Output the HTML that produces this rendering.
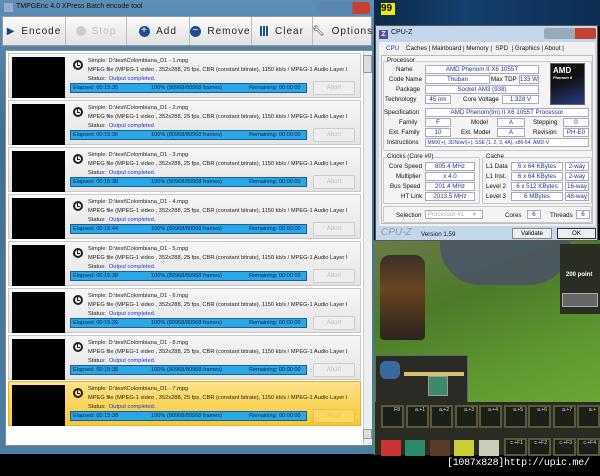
<!DOCTYPE html>
<html><head><meta charset="utf-8"><style>
*{margin:0;padding:0;box-sizing:border-box}
body{width:600px;height:476px;overflow:hidden;background:#000;position:relative;font-family:"Liberation Sans",sans-serif}
.a{position:absolute}
.win{left:0;top:0;width:374px;height:454px;background:linear-gradient(#5d8fb5,#3f6f98 30%,#4a7ea6);}
.tb{top:16px;left:2px;width:370px;height:30px;background:linear-gradient(#fafafa,#e2e2e2);border:1px solid #999}
.btn{position:absolute;top:0;height:28px;border-right:1px solid #bbb;font-size:10px;color:#222;letter-spacing:1px;display:flex;align-items:center;justify-content:center;gap:6px}
.list{left:5px;top:50px;width:367px;height:396px;background:#fff;border:1px solid #888}
.it{position:absolute;left:2px;width:353px;height:45px;background:linear-gradient(#f6f6f6,#e4e4e4);border:1px solid #c8c8c8}
.th{position:absolute;left:3px;top:3px;width:53px;height:41px;background:#000}
.ck{position:absolute;left:64px;top:6px;width:10px;height:10px;border:2px solid #222;border-radius:50%}
.ck:after{content:"";position:absolute;left:2px;top:0px;width:2px;height:3px;border-left:1.2px solid #222;border-bottom:1.2px solid #222}
.t{position:absolute;left:79px;font-size:5.7px;color:#222;white-space:nowrap}
.pb{position:absolute;left:61px;top:29px;width:237px;height:10px;background:#2aa7e6;border:1px solid #1a5f99;font-size:5.6px;color:#123;line-height:8px}
.pb span{position:absolute}
.ab{position:absolute;left:304px;top:27px;width:42px;height:14px;border:1px solid #ccc;border-radius:2px;background:#eee;font-size:6px;color:#bbb;text-align:center;line-height:13px}
.cz{left:375px;top:25px;width:223px;height:216px;background:#c4d6ea;border:1px solid #555}
.cb{position:absolute;background:#f0f0f0}
.f{position:absolute;font-size:6.2px;color:#111;white-space:nowrap}
.v{position:absolute;background:#fff;border:1px solid #aab;font-size:6.2px;color:#223399;text-align:center;line-height:8px;height:9px;white-space:nowrap;overflow:hidden}
.g{position:absolute;border:1px solid #c8c8c8;border-radius:2px}
.sl{position:absolute;width:23px;height:23px;background:#1c1f18;border:2px solid #5a5a38;font-size:5px;color:#ddd;text-align:right;padding-right:2px}
</style></head><body>
<div class="a" style="left:374px;top:0;width:226px;height:26px;background:linear-gradient(90deg,#0c2a4a,#13406e 40%,#0d2d52)"></div>
<div class="a" style="left:381px;top:3px;width:14px;height:12px;background:#ee0;color:#000;font-size:10px;font-weight:bold;line-height:12px">99</div>
<div class="a" style="left:374px;top:240px;width:226px;height:215px;background:linear-gradient(160deg,#6a7a4a,#4e7a2a 30%,#5e9a30 60%,#73b03a)"></div>
<div class="a" style="left:440px;top:240px;width:130px;height:45px;background:#4a5565;border-radius:0 0 40px 40px;opacity:.9"></div>
<div class="a" style="left:380px;top:255px;width:45px;height:85px;background:linear-gradient(#3a3028,#6a4420 40%,#2a2420);border-radius:10px 10px 4px 4px"></div>
<div class="a" style="left:560px;top:244px;width:40px;height:70px;background:#2a2d22"></div>
<div class="a" style="left:566px;top:272px;width:30px;font-size:6px;color:#fff;font-weight:bold">200 point</div>
<div class="a" style="left:562px;top:293px;width:36px;height:14px;background:#666;border:1px solid #aaa"></div>
<div class="a" style="left:375px;top:355px;width:93px;height:50px;background:#2b2b26;border:1px solid #666"></div>
<div class="a" style="left:404px;top:372px;width:60px;height:4px;background:#d9c070"></div>
<div class="a" style="left:380px;top:361px;width:20px;height:18px;background:#3a6a9a;border-radius:6px"></div>
<div class="a" style="left:428px;top:376px;width:20px;height:20px;background:#3c8a6a;border:1px solid #999"></div>
<div class="a" style="left:375px;top:402px;width:225px;height:53px;background:#2a2b22"></div>
<div class="sl" style="left:381px;top:405px">F8</div><div class="sl" style="left:406px;top:405px">a.+1</div><div class="sl" style="left:430px;top:405px">a.+2</div><div class="sl" style="left:455px;top:405px">a.+3</div><div class="sl" style="left:479px;top:405px">a.+4</div><div class="sl" style="left:504px;top:405px">a.+5</div><div class="sl" style="left:528px;top:405px">a.+6</div><div class="sl" style="left:553px;top:405px">a.+7</div><div class="sl" style="left:577px;top:405px">a.+</div>
<div class="a" style="left:381px;top:440px;width:20px;height:16px;background:#c33"></div><div class="a" style="left:405px;top:440px;width:20px;height:16px;background:#2a8a6a"></div><div class="a" style="left:430px;top:440px;width:20px;height:16px;background:#5a3a2a"></div><div class="a" style="left:454px;top:440px;width:20px;height:16px;background:#cc3"></div><div class="a" style="left:479px;top:440px;width:20px;height:16px;background:#ccb"></div>
<div class="sl" style="left:504px;top:438px;height:18px">c.+F1</div><div class="sl" style="left:528px;top:438px;height:18px">c.+F2</div><div class="sl" style="left:553px;top:438px;height:18px">c.+F3</div><div class="sl" style="left:577px;top:438px;height:18px">c.+F4</div>
<div class="a" style="left:447px;top:458px;font-size:10px;color:#fff;font-family:'Liberation Mono',monospace;letter-spacing:-0.3px;white-space:nowrap">[1087x828]http://upic.me/</div>

<div class="a win">
<div class="a" style="left:4px;top:3px;width:9px;height:9px;background:#9ac"></div>
<div class="a" style="left:16px;top:3px;font-size:7px;color:#111">TMPGEnc 4.0 XPress Batch encode tool</div>
<div class="a" style="left:318px;top:2px;width:52px;height:12px;background:linear-gradient(90deg,#5b86b0 66%,#c84030 66%);border-radius:3px"></div>
<div class="a tb">
<div class="btn" style="left:0;width:63px"><span style="color:#15457a">▶</span>Encode</div>
<div class="btn" style="left:63px;width:61px;color:#bbb"><span style="display:inline-block;width:10px;height:10px;border-radius:50%;background:#ccc"></span>Stop</div>
<div class="btn" style="left:124px;width:63px"><span style="display:inline-block;width:11px;height:11px;border-radius:50%;background:#1d4f8a;color:#fff;font-size:10px;line-height:10px;text-align:center">+</span>Add</div>
<div class="btn" style="left:187px;width:62px"><span style="display:inline-block;width:11px;height:11px;border-radius:50%;background:#1d4f8a;color:#fff;font-size:10px;line-height:10px;text-align:center">−</span>Remove</div>
<div class="btn" style="left:249px;width:61px"><span style="display:inline-block;width:9px;height:10px;background:repeating-linear-gradient(90deg,#1d4f8a 0 2px,#fff 2px 3px)"></span>Clear</div>
<div class="btn" style="left:310px;width:59px;border:none"><span style="color:#223">🔧︎</span>Options</div>
</div>
<div class="a list">
<div class="a" style="left:357px;top:0;width:9px;height:394px;background:#eee;border-left:1px solid #ccc"></div>
<div class="a" style="left:357px;top:4px;width:9px;height:18px;background:#ddd;border:1px solid #999"></div>
<div class="a" style="left:357px;top:378px;width:9px;height:10px;background:#ddd;border:1px solid #999"></div>

<div class="it" style="top:2px"><div class="th"></div><div class="ck"></div><div class="t" style="top:4px">Simple: D:\test\Colombiana_D1 - 1.mpg</div><div class="t" style="top:13px">MPEG file (MPEG-1 video , 352x288, 25 fps, CBR (constant bitrate), 1150 kb/s / MPEG-1 Audio Layer I</div><div class="t" style="top:22px">Status: <span style="color:#2233cc">&nbsp;Output completed.</span></div><div class="pb"><span style="left:2px">Elapsed: 00:15:35</span><span style="left:80px">100% (80968/80968 frames)</span><span style="left:178px">Remaining: 00:00:00</span></div><div class="ab">Abort</div></div>
<div class="it" style="top:49px"><div class="th"></div><div class="ck"></div><div class="t" style="top:4px">Simple: D:\test\Colombiana_D1 - 2.mpg</div><div class="t" style="top:13px">MPEG file (MPEG-1 video , 352x288, 25 fps, CBR (constant bitrate), 1150 kb/s / MPEG-1 Audio Layer I</div><div class="t" style="top:22px">Status: <span style="color:#2233cc">&nbsp;Output completed.</span></div><div class="pb"><span style="left:2px">Elapsed: 00:15:36</span><span style="left:80px">100% (80968/80968 frames)</span><span style="left:178px">Remaining: 00:00:00</span></div><div class="ab">Abort</div></div>
<div class="it" style="top:96px"><div class="th"></div><div class="ck"></div><div class="t" style="top:4px">Simple: D:\test\Colombiana_D1 - 3.mpg</div><div class="t" style="top:13px">MPEG file (MPEG-1 video , 352x288, 25 fps, CBR (constant bitrate), 1150 kb/s / MPEG-1 Audio Layer I</div><div class="t" style="top:22px">Status: <span style="color:#2233cc">&nbsp;Output completed.</span></div><div class="pb"><span style="left:2px">Elapsed: 00:15:38</span><span style="left:80px">100% (80968/80968 frames)</span><span style="left:178px">Remaining: 00:00:00</span></div><div class="ab">Abort</div></div>
<div class="it" style="top:143px"><div class="th"></div><div class="ck"></div><div class="t" style="top:4px">Simple: D:\test\Colombiana_D1 - 4.mpg</div><div class="t" style="top:13px">MPEG file (MPEG-1 video , 352x288, 25 fps, CBR (constant bitrate), 1150 kb/s / MPEG-1 Audio Layer I</div><div class="t" style="top:22px">Status: <span style="color:#2233cc">&nbsp;Output completed.</span></div><div class="pb"><span style="left:2px">Elapsed: 00:15:44</span><span style="left:80px">100% (80968/80968 frames)</span><span style="left:178px">Remaining: 00:00:00</span></div><div class="ab">Abort</div></div>
<div class="it" style="top:190px"><div class="th"></div><div class="ck"></div><div class="t" style="top:4px">Simple: D:\test\Colombiana_D1 - 5.mpg</div><div class="t" style="top:13px">MPEG file (MPEG-1 video , 352x288, 25 fps, CBR (constant bitrate), 1150 kb/s / MPEG-1 Audio Layer I</div><div class="t" style="top:22px">Status: <span style="color:#2233cc">&nbsp;Output completed.</span></div><div class="pb"><span style="left:2px">Elapsed: 00:15:38</span><span style="left:80px">100% (80968/80968 frames)</span><span style="left:178px">Remaining: 00:00:00</span></div><div class="ab">Abort</div></div>
<div class="it" style="top:237px"><div class="th"></div><div class="ck"></div><div class="t" style="top:4px">Simple: D:\test\Colombiana_D1 - 6.mpg</div><div class="t" style="top:13px">MPEG file (MPEG-1 video , 352x288, 25 fps, CBR (constant bitrate), 1150 kb/s / MPEG-1 Audio Layer I</div><div class="t" style="top:22px">Status: <span style="color:#2233cc">&nbsp;Output completed.</span></div><div class="pb"><span style="left:2px">Elapsed: 00:15:39</span><span style="left:80px">100% (80968/80968 frames)</span><span style="left:178px">Remaining: 00:00:00</span></div><div class="ab">Abort</div></div>
<div class="it" style="top:284px"><div class="th"></div><div class="ck"></div><div class="t" style="top:4px">Simple: D:\test\Colombiana_D1 - 8.mpg</div><div class="t" style="top:13px">MPEG file (MPEG-1 video , 352x288, 25 fps, CBR (constant bitrate), 1150 kb/s / MPEG-1 Audio Layer I</div><div class="t" style="top:22px">Status: <span style="color:#2233cc">&nbsp;Output completed.</span></div><div class="pb"><span style="left:2px">Elapsed: 00:15:38</span><span style="left:80px">100% (80968/80968 frames)</span><span style="left:178px">Remaining: 00:00:00</span></div><div class="ab">Abort</div></div>
<div class="it" style="top:330px;background:linear-gradient(#fde28a,#f8c832);border-color:#e0b030"><div class="th"></div><div class="ck"></div><div class="t" style="top:4px">Simple: D:\test\Colombiana_D1 - 7.mpg</div><div class="t" style="top:13px">MPEG file (MPEG-1 video , 352x288, 25 fps, CBR (constant bitrate), 1150 kb/s / MPEG-1 Audio Layer I</div><div class="t" style="top:22px">Status: <span style="color:#2233cc">&nbsp;Output completed.</span></div><div class="pb"><span style="left:2px">Elapsed: 00:15:38</span><span style="left:80px">100% (80968/80968 frames)</span><span style="left:178px">Remaining: 00:00:00</span></div><div class="ab" style="background:#fbd860;border-color:#e8c050;color:#e8c050">Abort</div></div>
</div>
</div>

<div class="a cz">
<div class="a" style="left:3px;top:4px;width:9px;height:9px;background:#5a4aa0;color:#fff;font-size:7px;line-height:9px;text-align:center;font-weight:bold">Z</div>
<div class="a" style="left:15px;top:3px;font-size:7px;color:#111">CPU-Z</div>
<div class="a" style="left:168px;top:2px;width:52px;height:11px;background:linear-gradient(90deg,#9ab 60%,#c8402f 60%);border-radius:2px"></div>
<div class="cb" style="left:3px;top:16px;width:216px;height:184px">
<div class="f" style="left:7px;top:3px;color:#2244aa">CPU</div>
<div class="f" style="left:27px;top:3px">Caches | Mainboard | Memory | &nbsp;SPD &nbsp;| Graphics | About |</div>
<div class="a" style="left:2px;top:13px;width:212px;height:169px;border:1px solid #bbb;background:#f4f4f4"></div>
<div class="g" style="left:4px;top:19px;width:209px;height:90px"></div>
<div class="f" style="left:8px;top:15px;background:#f4f4f4">Processor</div>
<div class="f" style="left:17px;top:24px">Name</div><div class="v" style="left:46px;top:23px;width:114px">AMD Phenom II X6 1055T</div>
<div class="f" style="left:10px;top:34px">Code Name</div><div class="v" style="left:46px;top:33px;width:65px">Thuban</div><div class="f" style="left:112px;top:34px">Max TDP</div><div class="v" style="left:140px;top:33px;width:20px">133 W</div>
<div class="f" style="left:17px;top:44px">Package</div><div class="v" style="left:46px;top:43px;width:114px">Socket AM3 (938)</div>
<div class="f" style="left:6px;top:54px">Technology</div><div class="v" style="left:46px;top:53px;width:26px">45 nm</div><div class="f" style="left:84px;top:54px">Core Voltage</div><div class="v" style="left:123px;top:53px;width:37px">1.328 V</div>
<div class="a" style="left:171px;top:21px;width:35px;height:42px;background:linear-gradient(160deg,#111 40%,#2a3a88);border:1px solid #666;color:#fff;font-size:8px;font-weight:bold;padding:2px">AMD<div style="font-size:4px;font-style:italic">Phenom II</div></div>
<div class="f" style="left:5px;top:67px">Specification</div><div class="v" style="left:46px;top:66px;width:164px">AMD Phenom(tm) II X6 1055T Processor</div>
<div class="f" style="left:20px;top:77px">Family</div><div class="v" style="left:46px;top:76px;width:26px">F</div><div class="f" style="left:92px;top:77px">Model</div><div class="v" style="left:118px;top:76px;width:28px">A</div><div class="f" style="left:154px;top:77px">Stepping</div><div class="v" style="left:184px;top:76px;width:26px">0</div>
<div class="f" style="left:10px;top:87px">Ext. Family</div><div class="v" style="left:46px;top:86px;width:26px">10</div><div class="f" style="left:82px;top:87px">Ext. Model</div><div class="v" style="left:118px;top:86px;width:28px">A</div><div class="f" style="left:154px;top:87px">Revision</div><div class="v" style="left:184px;top:86px;width:26px">PH-E0</div>
<div class="f" style="left:8px;top:97px">Instructions</div><div class="v" style="left:46px;top:96px;width:164px;text-align:left;font-size:5px">&nbsp;MMX(+), 3DNow!(+), SSE (1, 2, 3, 4A), x86-64, AMD-V</div>
<div class="g" style="left:4px;top:115px;width:97px;height:47px"></div><div class="f" style="left:8px;top:111px;background:#f4f4f4">Clocks (Core #0)</div>
<div class="f" style="left:10px;top:121px">Core Speed</div><div class="v" style="left:46px;top:120px;width:50px">805.4 MHz</div>
<div class="f" style="left:17px;top:131px">Multiplier</div><div class="v" style="left:46px;top:130px;width:50px">x 4.0</div>
<div class="f" style="left:11px;top:141px">Bus Speed</div><div class="v" style="left:46px;top:140px;width:50px">201.4 MHz</div>
<div class="f" style="left:22px;top:151px">HT Link</div><div class="v" style="left:46px;top:150px;width:50px">2013.5 MHz</div>
<div class="g" style="left:103px;top:115px;width:110px;height:47px"></div><div class="f" style="left:107px;top:111px;background:#f4f4f4">Cache</div>
<div class="f" style="left:107px;top:121px">L1 Data</div><div class="v" style="left:132px;top:120px;width:52px">6 x 64 KBytes</div><div class="v" style="left:186px;top:120px;width:24px">2-way</div>
<div class="f" style="left:107px;top:131px">L1 Inst.</div><div class="v" style="left:132px;top:130px;width:52px">6 x 64 KBytes</div><div class="v" style="left:186px;top:130px;width:24px">2-way</div>
<div class="f" style="left:107px;top:141px">Level 2</div><div class="v" style="left:132px;top:140px;width:52px">6 x 512 KBytes</div><div class="v" style="left:186px;top:140px;width:24px">16-way</div>
<div class="f" style="left:107px;top:151px">Level 3</div><div class="v" style="left:132px;top:150px;width:52px">6 MBytes</div><div class="v" style="left:186px;top:150px;width:24px">48-way</div>
<div class="g" style="left:4px;top:164px;width:209px;height:17px"></div>
<div class="f" style="left:17px;top:170px">Selection</div><div class="v" style="left:46px;top:168px;width:58px;color:#aaa;text-align:left">&nbsp;Processor #1 &nbsp;&nbsp;&nbsp;&nbsp;▾</div>
<div class="f" style="left:126px;top:170px">Cores</div><div class="v" style="left:148px;top:168px;width:14px">6</div>
<div class="f" style="left:171px;top:170px">Threads</div><div class="v" style="left:197px;top:168px;width:14px">6</div>
</div>
<div class="a" style="left:5px;top:201px;font-size:10px;color:#999;font-style:italic">CPU-Z</div>
<div class="a" style="left:45px;top:205px;font-size:6.2px;color:#111">Version 1.59</div>
<div class="a" style="left:136px;top:202px;width:40px;height:11px;background:#eee;border:1px solid #888;font-size:6.2px;text-align:center;line-height:10px">Validate</div>
<div class="a" style="left:181px;top:202px;width:39px;height:11px;background:#eee;border:1px solid #333;font-size:6.2px;text-align:center;line-height:10px">OK</div>
</div>
</body></html>
